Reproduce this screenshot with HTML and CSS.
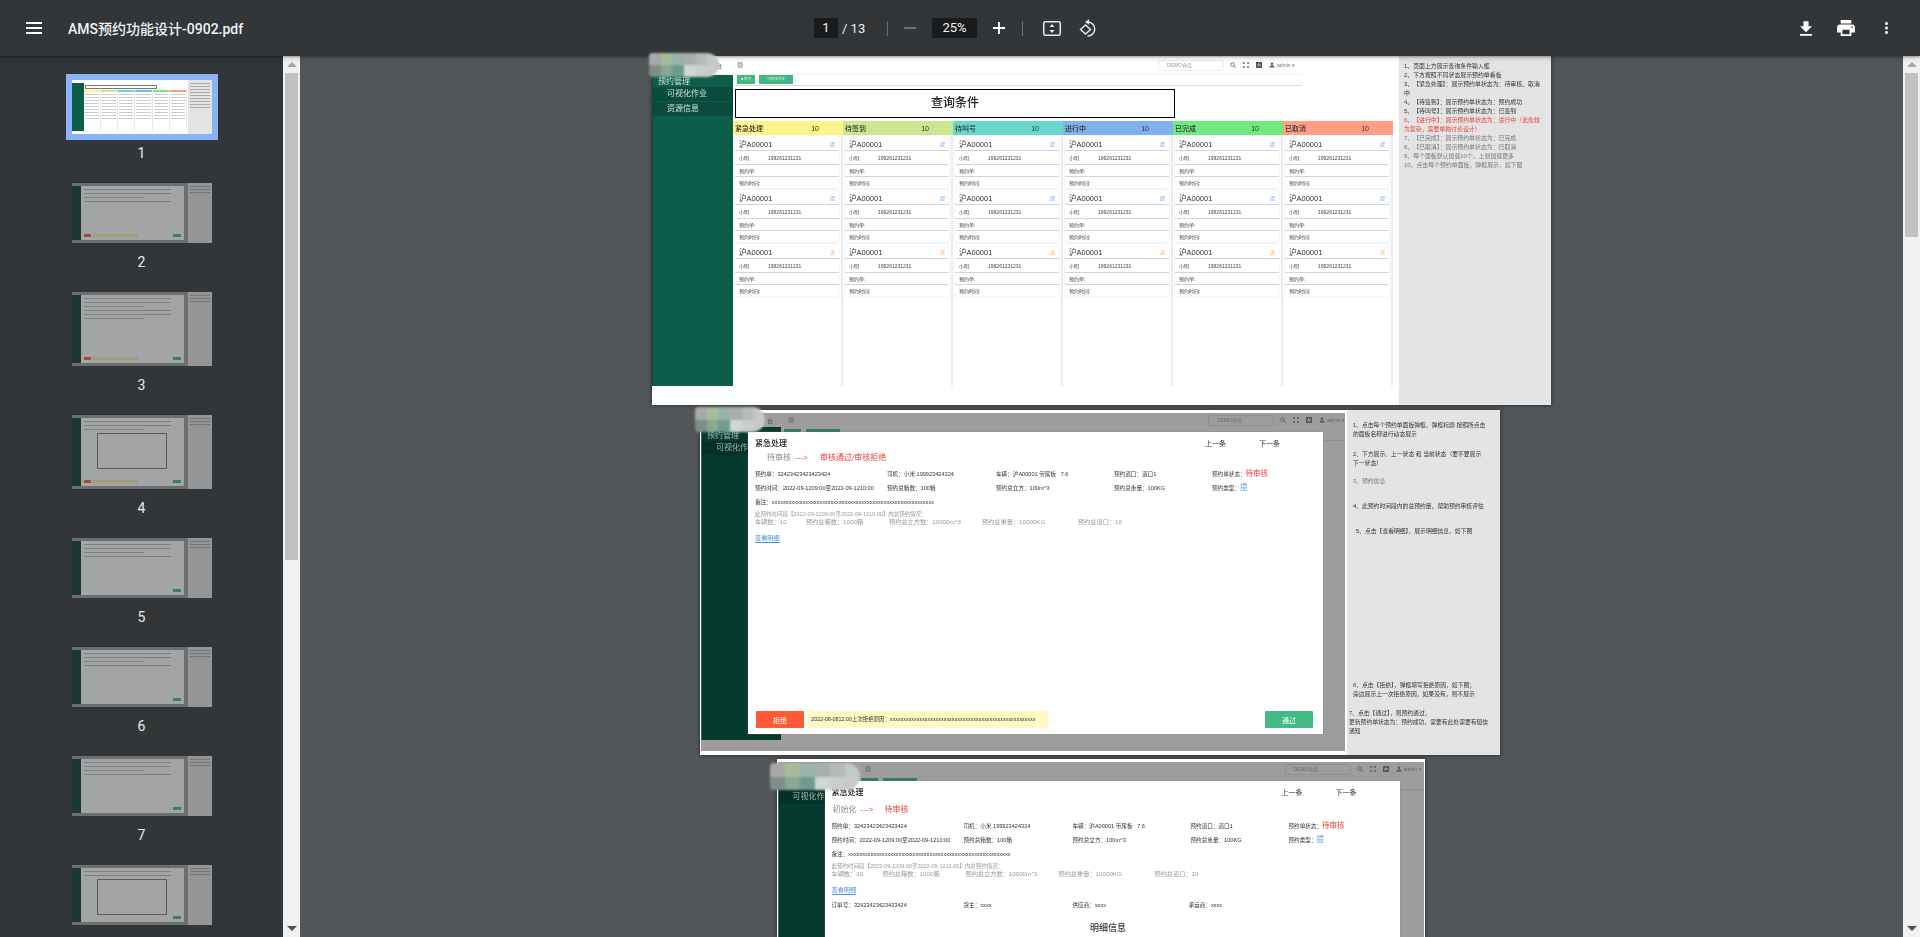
FILE: index.html
```html
<!DOCTYPE html>
<html lang="zh">
<head>
    <meta charset="UTF-8">
    <title>AMS预约功能设计-0902.pdf</title>
    <link rel="stylesheet" href="styles.css">
</head>
<body>
<svg class="defs" width="0" height="0">
    <symbol id="i-search" viewBox="0 0 12 12"><circle cx="5" cy="5" r="3.6" fill="none" stroke="currentColor" stroke-width="1.5"/><path d="M8 8l3.4 3.4" stroke="currentColor" stroke-width="1.7"/></symbol>
    <symbol id="i-full" viewBox="0 0 12 12"><path d="M1 4V1h3M8 1h3v3M11 8v3H8M4 11H1V8M1 1l3 3M11 1L8 4M11 11L8 8M1 11l3-3" fill="none" stroke="currentColor" stroke-width="1.3"/></symbol>
    <symbol id="i-lang" viewBox="0 0 12 12"><path d="M0 0h12v12H0z" fill="currentColor"/><path d="M3 9l2-6 1.5 4M8 4v5" fill="none" stroke="#fff" stroke-width="1"/></symbol>
    <symbol id="i-user" viewBox="0 0 12 12"><circle cx="6" cy="3.5" r="2.6" fill="currentColor"/><path d="M1 11c0-3 2-4 5-4s5 1 5 4z" fill="currentColor"/></symbol>
    <symbol id="i-nav" viewBox="0 0 12 12"><path d="M1 2h10M1 6h6M1 10h10" stroke="currentColor" stroke-width="1.6"/><path d="M11 4v4L8 6z" fill="currentColor"/></symbol>
</svg>

<header class="toolbar">
    <div class="tb-left">
        <svg class="ic-menu" viewBox="3 6 18 12" preserveAspectRatio="none"><path d="M3 18h18v-2H3v2zm0-5h18v-2H3v2zm0-7v2h18V6H3z" fill="#fff"/></svg>
        <span class="doc-name">AMS预约功能设计-0902.pdf</span>
    </div>
    <div class="tb-mid">
        <span class="num-box page-box">1</span>
        <span class="page-total">/ 13</span>
        <i class="tb-sep sep-a"></i>
        <i class="tb-minus"></i>
        <span class="num-box zoom-box">25%</span>
        <svg class="ic-plus" viewBox="0 0 12 12"><path d="M0 6h12M6 0v12" stroke="#fff" stroke-width="1.8"/></svg>
        <i class="tb-sep sep-b"></i>
        <svg class="ic-fit" viewBox="0 0 18 15"><rect x=".75" y=".75" width="16.5" height="13.5" rx="1.5" fill="none" stroke="#e8eaed" stroke-width="1.5"/><path d="M9 3l2.5 3h-5zM9 12L6.500 9h5z" fill="#e8eaed"/></svg>
        <svg class="ic-rotate" viewBox="0 0 18 18"><path d="M9 3a7 7 0 1 1-.5 14" fill="none" stroke="#e8eaed" stroke-width="1.4"/><path d="M10 .2L6 3l4 2.800z" fill="#e8eaed"/><path d="M6.500 6L1.500 10.500l5 4.500 5-4.500z" fill="none" stroke="#e8eaed" stroke-width="1.4"/></svg>
    </div>
    <div class="tb-right">
        <svg class="ic-down" viewBox="5 3 14 17"><path d="M19 9h-4V3H9v6H5l7 7 7-7zM5 18v2h14v-2H5z" fill="#fff"/></svg>
        <svg class="ic-print" viewBox="2 3 20 18"><path d="M19 8H5c-1.660 0-3 1.340-3 3v6h4v4h12v-4h4v-6c0-1.660-1.340-3-3-3zm-3 11H8v-5h8v5zm3-7c-.55 0-1-.45-1-1s.45-1 1-1 1 .45 1 1-.45 1-1 1zm-1-9H6v4h12V3z" fill="#fff"/></svg>
        <svg class="ic-more" viewBox="10 4 4 16"><path d="M12 8c1.100 0 2-.9 2-2s-.9-2-2-2-2 .9-2 2 .9 2 2 2zm0 2c-1.100 0-2 .9-2 2s.9 2 2 2 2-.9 2-2-.9-2-2-2zm0 6c-1.100 0-2 .9-2 2s.9 2 2 2 2-.9 2-2-.9-2-2-2z" fill="#fff"/></svg>
    </div>
</header>

<div class="viewer">
    <aside class="sidenav" id="thumbs"></aside>
    <div class="vbar">
        <b class="arrow up"></b>
        <div class="track"><div class="bar-thumb side-thumb"></div></div>
        <b class="arrow down"></b>
    </div>

    <main class="pages">
        <!-- 第一页：看板 -->
        <section class="page page-1">
            <div class="smudge smudge-1"><i></i><i></i><i></i><i></i><i></i><i></i><i></i><i></i><i></i><i></i><i></i><i></i></div>
            <div class="sheet">
                <div class="p1-left">
                    <div class="app-bar">
                        <span class="crumb">台</span>
                        <svg class="mini nav-ic"><use href="#i-nav"/></svg>
                        <span class="search-box">DEMO仓库</span>
                        <svg class="mini"><use href="#i-search"/></svg>
                        <svg class="mini"><use href="#i-full"/></svg>
                        <svg class="mini"><use href="#i-lang"/></svg>
                        <svg class="mini"><use href="#i-user"/></svg>
                        <span class="admin">admin ▾</span>
                    </div>
                    <div class="p1-body">
                        <nav class="side">
                            <div class="side-head">预约管理</div>
                            <div class="side-item">可视化作业</div>
                            <div class="side-item">资源信息</div>
                        </nav>
                        <div class="work">
                            <div class="tabs"><span class="tab tab-home">■ 首页</span><span class="tab tab-cur">可视化作业</span></div>
                            <div class="query">查询条件</div>
                            <div class="board" id="board"></div>
                        </div>
                    </div>
                </div>
                <div class="notes notes-1">
                    <p>1、页面上方展示查询条件输入框</p>
                    <p>2、下方按照不同状态展示预约单看板</p>
                    <p>3、【紧急处理】：展示预约单状态为：待审核、取消<br>中</p>
                    <p>4、【待签到】：展示预约单状态为：预约成功</p>
                    <p>5、【待叫号】：展示预约单状态为：已签到</p>
                    <p class="warn">6、【进行中】：展示预约单状态为：进行中（此处较<br>为复杂，需要单独讨论设计）</p>
                    <p class="soft">7、【已完成】：展示预约单状态为：已完成</p>
                    <p class="soft">8、【已取消】：展示预约单状态为：已取消</p>
                    <p class="soft">9、每个面板默认加载10个，上划加载更多</p>
                    <p class="soft">10、点击每个预约单面板，弹框展示，如下图</p>
                </div>
            </div>
        </section>

        <!-- 第二页：弹框 -->
        <section class="page page-2">
            <div class="smudge smudge-2"><i></i><i></i><i></i><i></i><i></i><i></i><i></i><i></i><i></i><i></i><i></i><i></i></div>
            <div class="sheet">
                <div class="shot">
                    <div class="dim">
                        <div class="app-bar dim-bar">
                            <span class="crumb">台</span>
                            <svg class="mini nav-ic"><use href="#i-nav"/></svg>
                            <span class="search-box">DEMO仓库</span>
                            <svg class="mini"><use href="#i-search"/></svg>
                            <svg class="mini"><use href="#i-full"/></svg>
                            <svg class="mini"><use href="#i-lang"/></svg>
                            <svg class="mini"><use href="#i-user"/></svg>
                            <span class="admin">admin ▾</span>
                        </div>
                        <div class="dim-body">
                            <nav class="side dim-side">
                                <div class="side-head">预约管理</div>
                                <div class="side-item">可视化作业</div>
                            </nav>
                            <div class="dim-work"><div class="dim-rule"></div></div>
                        </div>
                        <div class="peek"><i></i><i></i><i></i></div>
                        <div class="modal modal-2">
                            <div class="m-head"><strong>紧急处理</strong><span class="m-prev">上一条</span><span class="m-next">下一条</span></div>
                            <div class="m-flow"><span class="was">待审核</span><span class="to">---&gt;</span><span class="now">审核通过/审核拒绝</span></div>
                            <div class="m-grid">
                                <span>预约单：32423423423423424</span><span>司机：小米 199923424324</span><span>车辆：沪A00001 带尾板 &nbsp; 7.6</span><span>预约道口：道口1</span><span>预约单状态：<em class="st-red">待审核</em></span>
                                <span>预约时间：2022-09-1209:00至2022-09-1210:00</span><span>预约总箱数：100箱</span><span>预约总立方：100m^3</span><span>预约总重量：100KG</span><span>预约类型：<em class="st-blue">提</em></span>
                            </div>
                            <div class="m-memo">备注：xxxxxxxxxxxxxxxxxxxxxxxxxxxxxxxxxxxxxxxxxxxxxxxxxxxxxxxxxx</div>
                            <div class="m-tip">此预约时间段【2022-09-1209:00至2022-09-1210:00】内总预约情况：</div>
                            <div class="m-sum"><span>车辆数：10</span><span>预约总箱数：1000箱</span><span>预约总立方数：10000m^3</span><span>预约总重量：10000KG</span><span>预约总道口：10</span></div>
                            <a class="m-link">查看明细</a>
                            <div class="m-foot">
                                <button class="btn btn-no">拒绝</button>
                                <div class="m-reason">2022-08-0812:00上次拒绝原因：xxxxxxxxxxxxxxxxxxxxxxxxxxxxxxxxxxxxxxxxxxxxxxxxxxxxxx</div>
                                <button class="btn btn-ok">通过</button>
                            </div>
                        </div>
                    </div>
                </div>
                <div class="notes notes-2">
                    <p>1、点击每个预约单面板弹框，弹框标题 按照所点击<br>的面板名称进行动态展示</p>
                    <p>2、下方展示、上一状态 和 当前状态（要不要展示<br>下一状态）</p>
                    <p class="soft">3、预约信息</p>
                    <p>4、此预约时间段内的总预约量，帮助预约审核评估</p>
                    <p>5、点击【查看明细】，展示明细信息，如下图</p>
                    <p>6、点击【拒绝】，弹框填写拒绝原因，如下图；<br>旁边展示上一次拒绝原因，如果没有，则不展示</p>
                    <p>7、点击【通过】，则预约通过，<br>更新预约单状态为：预约成功，需要有此处需要有短信<br>通知</p>
                </div>
            </div>
        </section>

        <!-- 第三页：明细 -->
        <section class="page page-3">
            <div class="smudge smudge-3"><i></i><i></i><i></i><i></i><i></i><i></i><i></i><i></i><i></i><i></i><i></i><i></i></div>
            <div class="sheet">
                <div class="shot">
                    <div class="dim">
                        <div class="app-bar dim-bar">
                            <span class="crumb">台</span>
                            <svg class="mini nav-ic"><use href="#i-nav"/></svg>
                            <span class="search-box">DEMO仓库</span>
                            <svg class="mini"><use href="#i-search"/></svg>
                            <svg class="mini"><use href="#i-full"/></svg>
                            <svg class="mini"><use href="#i-lang"/></svg>
                            <svg class="mini"><use href="#i-user"/></svg>
                            <span class="admin">admin ▾</span>
                        </div>
                        <div class="dim-body">
                            <nav class="side dim-side">
                                <div class="side-head">预约管理</div>
                                <div class="side-item">可视化作业</div>
                            </nav>
                            <div class="dim-work"><div class="dim-rule"></div></div>
                        </div>
                        <div class="peek"><i></i><i></i><i></i></div>
                        <div class="modal modal-3">
                            <div class="m-head"><strong>紧急处理</strong><span class="m-prev">上一条</span><span class="m-next">下一条</span></div>
                            <div class="m-flow"><span class="was">初始化</span><span class="to">---&gt;</span><span class="now">待审核</span></div>
                            <div class="m-grid">
                                <span>预约单：32423423423423424</span><span>司机：小米 199923424324</span><span>车辆：沪A00001 带尾板 &nbsp; 7.6</span><span>预约道口：道口1</span><span>预约单状态：<em class="st-red">待审核</em></span>
                                <span>预约时间：2022-09-1209:00至2022-09-1210:00</span><span>预约总箱数：100箱</span><span>预约总立方：100m^3</span><span>预约总重量：100KG</span><span>预约类型：<em class="st-blue">提</em></span>
                            </div>
                            <div class="m-memo">备注：xxxxxxxxxxxxxxxxxxxxxxxxxxxxxxxxxxxxxxxxxxxxxxxxxxxxxxxxxx</div>
                            <div class="m-tip">此预约时间段【2022-09-1209:00至2022-09-1210:00】内总预约情况：</div>
                            <div class="m-sum"><span>车辆数：10</span><span>预约总箱数：1000箱</span><span>预约总立方数：10000m^3</span><span>预约总重量：10000KG</span><span>预约总道口：10</span></div>
                            <a class="m-link">查看明细</a>
                            <div class="m-order"><span>订单号：32423423423423424</span><span>货主：xxxx</span><span>供应商：xxxx</span><span>承运商：xxxx</span></div>
                            <div class="m-detail">明细信息</div>
                        </div>
                    </div>
                </div>
            </div>
        </section>
    </main>

    <div class="vbar">
        <b class="arrow up"></b>
        <div class="track"><div class="bar-thumb main-thumb"></div></div>
        <b class="arrow down"></b>
    </div>
</div>

<script src="script.js"></script>
</body>
</html>
```

FILE: styles.css
```css
* {
    padding: 0;
    margin: 0;
    box-sizing: border-box;
}

html, body {
    width: 1920px;
    height: 937px;
    overflow: hidden;
}

body {
    background: #525659;
    font-family: Roboto, "Noto Sans CJK SC", sans-serif;
    display: flex;
    flex-direction: column;
}

.defs {
    position: absolute;
}

/* 顶部工具栏 */
.toolbar {
    height: 56px;
    flex: none;
    background: #323639;
    color: #f1f3f4;
    display: flex;
    align-items: center;
    position: relative;
    z-index: 2;
    box-shadow: 0 1px 2px rgba(0, 0, 0, .3), 0 2px 6px rgba(0, 0, 0, .15);
}

.tb-left {
    width: 814px;
    padding-left: 26px;
    display: flex;
    align-items: center;
}

.ic-menu {
    width: 16px;
    height: 12px;
}

.doc-name {
    margin-left: 26px;
    font-size: 14px;
    font-weight: 500;
}

.tb-mid {
    display: flex;
    align-items: center;
    font-size: 13px;
}

.num-box {
    height: 20px;
    line-height: 20px;
    background: #191b1c;
    text-align: center;
}

.page-box {
    width: 24px;
}

.page-total {
    margin-left: 4px;
    width: 24px;
}

.tb-sep {
    width: 1px;
    height: 15px;
    background: #6b6e70;
}

.sep-a {
    margin-left: 21px;
}

.sep-b {
    margin-left: 17px;
}

.tb-minus {
    width: 12px;
    height: 2px;
    margin-left: 16px;
    background: #6f7274;
}

.zoom-box {
    width: 45px;
    margin-left: 16px;
}

.ic-plus {
    width: 12px;
    height: 12px;
    margin-left: 16px;
}

.ic-fit {
    width: 18px;
    height: 15px;
    margin-left: 20px;
}

.ic-rotate {
    width: 18px;
    height: 18px;
    margin-left: 18px;
}

.tb-right {
    margin-left: auto;
    padding-right: 32px;
    display: flex;
    align-items: center;
}

.ic-down {
    width: 12px;
    height: 15px;
}

.ic-print {
    width: 18px;
    height: 16px;
    margin-left: 25px;
}

.ic-more {
    width: 3px;
    height: 12px;
    margin-left: 30px;
}

.viewer {
    flex: 1;
    min-height: 0;
    display: flex;
}

/* 左侧缩略图 */
.sidenav {
    width: 283px;
    flex: none;
    background: #323639;
    padding-top: 24px;
    overflow: hidden;
    display: flex;
    flex-direction: column;
    align-items: center;
    color: #e8eaed;
    font-size: 14px;
}

.t-item {
    flex: none;
    width: 140px;
    text-align: center;
}

.t-label {
    height: 14px;
    line-height: 14px;
    margin: 12px 0 23px;
}

.t-page {
    width: 140px;
    background: #fff;
    display: flex;
    text-align: left;
    filter: blur(.4px);
}

.t-dimmed {
    opacity: .55;
}

.t-cur {
    outline: 6px solid #8ab4f8;
}

.t-main {
    flex: 1;
    display: flex;
    flex-direction: column;
}

.t-top {
    height: 3px;
}

.t-body {
    flex: 1;
    display: flex;
    margin-bottom: 3px;
}

.t-green {
    width: 12px;
    background: #0d5d4b;
}

.t-work {
    flex: 1;
    padding-top: 2px;
}

.t-query {
    width: 72px;
    height: 4px;
    margin-left: 1px;
    border: 1px solid #777;
}

.t-cols {
    display: flex;
    margin-top: 1px;
}

.t-col {
    flex: 1;
    height: 41px;
    border-right: 1px solid #e8e8e8;
}

.t-col u {
    display: block;
    height: 2px;
}

.t-col s {
    display: block;
    height: 1px;
    margin: 2px 1px;
    background: #ccc;
}

.t-note {
    width: 24px;
    background: #e4e4e4;
    padding: 3px 2px;
}

.t-note s {
    display: block;
    height: 1px;
    margin-bottom: 2px;
    background: #aaa;
}

.t-shot {
    flex: 1;
    background: #9d9d9d;
    display: flex;
    padding: 3px 4px 3px 0;
}

.t-dside {
    width: 9px;
    background: #053b2f;
}

.t-modal {
    flex: 1;
    background: #fff;
    padding: 3px;
    display: flex;
    flex-direction: column;
}

.t-modal s {
    display: block;
    height: 1px;
    width: 90%;
    margin-bottom: 3px;
    background: #bbb;
}

.t-modal s:nth-child(3n) {
    width: 62%;
}

.t-foot {
    margin-top: auto;
    display: flex;
    justify-content: space-between;
    gap: 1px;
}

.t-foot i {
    height: 3px;
    width: 8px;
    background: #43ba84;
}

.t-foot i.r {
    background: #ff5a36;
    width: 7px;
}

.t-foot i.y {
    background: #fff4b0;
    flex: 1;
    margin-right: 34px;
}

.t-foot i.blank {
    background: none;
    flex: 1;
}

.t-pop {
    width: 70px;
    height: 36px;
    margin: 0 auto;
    border: 1px solid #777;
    background: #fff;
}

/* 滚动条 */
.vbar {
    width: 17px;
    flex: none;
    background: #f1f1f1;
    display: flex;
    flex-direction: column;
    position: relative;
    z-index: 1;
}

.arrow {
    height: 17px;
    flex: none;
    display: flex;
    align-items: center;
    justify-content: center;
}

.arrow:after {
    content: "";
    border-left: 5px solid transparent;
    border-right: 5px solid transparent;
}

.up:after {
    border-bottom: 5px solid #a3a3a3;
}

.down:after {
    border-top: 5px solid #505050;
}

.track {
    flex: 1;
}

.bar-thumb {
    margin: 0 2px;
    background: #c1c1c1;
}

.side-thumb {
    height: 487px;
}

.main-thumb {
    height: 164px;
}

/* PDF 页面 */
.pages {
    flex: 1;
    min-width: 0;
    height: 881px;
    display: flex;
    flex-direction: column;
    align-items: center;
    gap: 4px;
}

.page {
    flex: none;
    position: relative;
    font-family: "Liberation Sans", "Noto Sans CJK SC", sans-serif;
    box-shadow: 0 0 4px rgba(0, 0, 0, .55);
}

.sheet {
    width: 100%;
    height: 100%;
    background: #fff;
    display: flex;
    color: #333;
    font-size: 6px;
    filter: blur(.35px);
}

.page-1 {
    width: 899px;
    height: 349px;
}

.page-2 {
    width: 800px;
    height: 345px;
    margin: 1px 3px 0 0;
}

.page-3 {
    width: 648px;
    height: 179px;
    margin: 0 2px 0 0;
}

/* 打码的 logo */
.smudge {
    position: absolute;
    z-index: 3;
    display: grid;
    grid-template-columns: repeat(6, 1fr);
    grid-template-rows: 1fr 1fr;
    overflow: hidden;
    border-radius: 4px 14px 14px 4px;
    filter: blur(1px);
}

.smudge-1 {
    left: -3px;
    top: -3px;
    width: 70px;
    height: 24px;
}

.smudge-2 {
    left: -5px;
    top: -3px;
    width: 70px;
    height: 25px;
}

.smudge-3 {
    left: -7px;
    top: 4px;
    width: 90px;
    height: 27px;
}

.smudge i:nth-child(1) { background: #a9a9a9; }
.smudge i:nth-child(2) { background: #a3bd9b; }
.smudge i:nth-child(3) { background: #9ab3a8; }
.smudge i:nth-child(4) { background: #a8afab; }
.smudge i:nth-child(5) { background: #b5bbb8; }
.smudge i:nth-child(6) { background: #c4c8c6; }
.smudge i:nth-child(7) { background: #7f8f88; }
.smudge i:nth-child(8) { background: #86a894; }
.smudge i:nth-child(9) { background: #6f9c8c; }
.smudge i:nth-child(10) { background: #cfd6d3; }
.smudge i:nth-child(11) { background: #c9cecc; }
.smudge i:nth-child(12) { background: #c9c9c9; }

/* 截图里的顶栏 */
.app-bar {
    height: 19px;
    width: 650px;
    display: flex;
    align-items: center;
    padding-left: 64px;
    color: #555;
    font-size: 5px;
    border-bottom: 1px solid #f2f2f2;
}

.crumb {
    width: 8px;
    font-size: 6px;
}

.mini {
    width: 6px;
    height: 6px;
    margin-left: 7px;
    color: #555;
}

.nav-ic {
    margin-left: 13px;
    margin-right: 415px;
}

.search-box {
    width: 66px;
    height: 11px;
    line-height: 9px;
    padding-left: 8px;
    margin-right: -1px;
    border: 1px solid #eee;
    border-radius: 2px;
    color: #999;
}

.admin {
    margin-left: 2px;
    color: #777;
    white-space: nowrap;
}

.p1-left {
    width: 747px;
    flex: none;
}

.p1-body {
    height: 311px;
    display: flex;
}

.side {
    width: 81px;
    flex: none;
    background: #0d5d4b;
    color: #cfe3dc;
    font-size: 8px;
    padding-top: 2px;
    border-left: 1px solid #0a4a3c;
}

.side-head {
    height: 10px;
    line-height: 10px;
    padding-left: 5px;
}

.side-item {
    height: 14px;
    line-height: 14px;
    padding-left: 14px;
    margin-bottom: 1px;
    background: #0b4b3e;
}

.work {
    flex: 1;
    min-width: 0;
}

.tabs {
    height: 11px;
    padding-left: 4px;
    display: flex;
    border-bottom: 1px solid #ddd;
    width: 569px;
}

.tab {
    height: 9px;
    line-height: 9px;
    font-size: 3.500px;
    color: #d8f3e6;
    text-align: center;
    background: #41b883;
}

.tab-home {
    width: 18px;
}

.tab-cur {
    width: 34px;
    margin-left: 4px;
}

.query {
    width: 440px;
    height: 29px;
    margin: 3px 0 0 2px;
    border: 1px solid #000;
    text-align: center;
    line-height: 27px;
    font-size: 12px;
    font-weight: 500;
    color: #222;
}

.board {
    width: 660px;
    margin-top: 3px;
    display: grid;
    grid-template-columns: repeat(6, 110px);
}

.col-head {
    height: 14px;
    padding: 0 24px 0 2px;
    display: flex;
    justify-content: space-between;
    align-items: center;
    font-size: 7px;
    font-weight: 500;
    color: #333;
}

.col-body {
    height: 251px;
    padding: 1px 2px 0 2px;
    border-right: 2px solid #e9ecf1;
}

.card {
    height: 52px;
    margin-bottom: 2px;
    border-radius: 2px;
    box-shadow: 0 0 2px #d8dbe0;
    background: #fff;
    font-size: 5px;
    color: #444;
}

.card div {
    display: flex;
    align-items: center;
    padding: 0 4px;
    border-bottom: 1px solid #d4d4d4;
}

.card .c-title {
    height: 15px;
    font-size: 7.500px;
    color: #333;
    justify-content: space-between;
}

.c-title em {
    font-style: normal;
    font-size: 5px;
}

.c-blue {
    color: #6aa5ff;
}

.c-orange {
    color: #ffab66;
}

.card .c-name {
    height: 14px;
    gap: 19px;
}

.card .c-no {
    height: 12px;
}

.card .c-time {
    height: 11px;
    border-bottom: 0;
}

.notes {
    flex: 1;
    background: #e4e4e4;
    font-size: 5.800px;
    line-height: 9px;
    color: #333;
}

.notes-1 {
    font-size: 5.900px;
    padding: 6px 4px 0 5px;
}

.warn {
    color: #e8403a;
}

.soft {
    color: #777;
}

/* 第二、三页的灰色遮罩截图 */
.shot {
    width: 647px;
    flex: none;
    padding: 3px 2px 4px 1px;
}

.page-3 .shot {
    width: 100%;
    padding: 3px 1px 0;
}

.dim {
    height: 100%;
    background: #9d9d9d;
    position: relative;
    display: flex;
    flex-direction: column;
    overflow: hidden;
}

.dim-bar {
    height: 14px;
    width: 100%;
    border: 0;
    color: #555;
    padding-left: 66px;
    flex: none;
}

.dim-bar .nav-ic {
    margin-right: 414px;
}

.dim-bar .search-box {
    border-color: #8f8f8f;
    color: #6c6c6c;
}

.dim-bar .admin {
    color: #666;
}

.dim-body {
    flex: 1;
    min-height: 0;
    display: flex;
}

.dim-side {
    width: 80px;
    height: 313px;
    background: #053b2f;
    color: #a5b9b2;
    padding-top: 4px;
    border-left: 1px solid #2a6b58;
}

.dim-side .side-item {
    background: #03302a;
}

.dim-work {
    flex: 1;
}

.dim-rule {
    height: 1px;
    margin-top: 13px;
    background: #8f8f8f;
}

/* 露在弹框上面的页签 */
.peek {
    position: absolute;
    left: 57px;
    top: 16px;
    display: flex;
    gap: 5px;
}

.peek i {
    height: 3px;
    width: 21px;
    background: #0a3a30;
}

.peek i:nth-child(2) {
    width: 17px;
    background: #2f7d5a;
}

.peek i:nth-child(3) {
    width: 34px;
    background: #2f7d5a;
}

.modal {
    position: absolute;
    left: 47px;
    top: 19px;
    width: 575px;
    background: #fff;
    padding: 6px 9px 6px 7px;
    display: flex;
    flex-direction: column;
    color: #333;
    box-shadow: 0 0 1px #777;
}

.modal-2 {
    height: 302px;
}

.modal-3 {
    height: 157px;
}

.m-head {
    height: 12px;
    line-height: 12px;
    display: flex;
    font-size: 7px;
}

.m-head strong {
    font-size: 8px;
    font-weight: 500;
    color: #222;
    width: 450px;
}

.m-next {
    margin-left: 33px;
}

.m-flow {
    height: 12px;
    line-height: 12px;
    margin-top: 2px;
    padding-left: 12px;
    display: flex;
    font-size: 8px;
}

.modal-3 .m-flow {
    margin-top: 5px;
    padding-left: 1px;
}

.was {
    color: #8a8a8a;
    width: 28px;
}

.to {
    color: #e8403a;
    width: 25px;
}

.modal-3 .to {
    width: 24px;
}

.now {
    color: #e8403a;
}

.m-grid {
    margin-top: 3px;
    display: grid;
    grid-template-columns: 132px 109px 118px 98px 1fr;
    grid-auto-rows: 14px;
    line-height: 14px;
    font-size: 5.600px;
    white-space: nowrap;
}

.m-grid em {
    font-style: normal;
    font-size: 7.500px;
}

.st-red {
    color: #e8403a;
}

.st-blue {
    color: #5a9bf0;
}

.m-memo {
    height: 14px;
    line-height: 14px;
    font-size: 5.600px;
    white-space: nowrap;
}

.m-tip {
    height: 8px;
    line-height: 8px;
    margin-top: 1px;
    font-size: 5.500px;
    color: #999;
}

.m-sum {
    height: 8px;
    line-height: 8px;
    display: grid;
    grid-template-columns: 51px 83px 93px 96px 1fr;
    font-size: 6.200px;
    color: #999;
    white-space: nowrap;
}

.m-link {
    align-self: flex-start;
    height: 9px;
    line-height: 8px;
    margin-top: 8px;
    font-size: 6.200px;
    color: #4a90e2;
    border-bottom: 1px solid #4a90e2;
}

.m-foot {
    margin-top: auto;
    padding: 0 1px 0 1px;
    display: flex;
    height: 17px;
}

.btn {
    border: 0;
    border-radius: 1px;
    width: 48px;
    font-family: inherit;
    font-size: 7px;
    color: #fff;
}

.btn-no {
    background: #ff5a36;
}

.btn-ok {
    background: #43ba84;
    margin-left: auto;
}

.m-reason {
    width: 241px;
    margin-left: 3px;
    padding-left: 4px;
    line-height: 17px;
    background: #fff9c4;
    font-size: 5.400px;
    white-space: nowrap;
    overflow: hidden;
}

.m-order {
    margin-top: 3px;
    height: 14px;
    line-height: 14px;
    display: grid;
    grid-template-columns: 132px 109px 116px 1fr;
    font-size: 5.600px;
}

.m-detail {
    margin-top: 10px;
    line-height: 12px;
    text-align: center;
    font-size: 9px;
    font-weight: 500;
    padding-right: 6px;
}

.notes-2 {
    padding: 11px 2px 0 6px;
}

.notes-2 p:nth-child(2) { margin-top: 11px; }
.notes-2 p:nth-child(3) { margin-top: 9px; }
.notes-2 p:nth-child(4) { margin-top: 16px; }
.notes-2 p:nth-child(5) { margin-top: 16px; padding-left: 3px; }
.notes-2 p:nth-child(6) { margin-top: 145px; }
.notes-2 p:nth-child(7) { margin-top: 10px; margin-left: -4px; }
```

FILE: script.js
```js
// 看板：六列，每列三张卡片
var cols = [
    ["紧急处理", "#fff38a"],
    ["待签到", "#cbe78f"],
    ["待叫号", "#69d8cc"],
    ["进行中", "#7fb2ec"],
    ["已完成", "#6fea7f"],
    ["已取消", "#ff9d85"]
];
var board = document.getElementById("board");
var html = "";
for (var i = 0; i < cols.length; i++) {
    html += '<div><div class="col-head" style="background:' + cols[i][1] + '"><span>' + cols[i][0] + '</span><span>10</span></div><div class="col-body">';
    for (var j = 0; j < 3; j++) {
        var tag = j == 2 ? '<em class="c-orange">送</em>' : '<em class="c-blue">提</em>';
        html += '<div class="card"><div class="c-title"><span>沪A00001</span>' + tag + '</div>'
            + '<div class="c-name"><span>小明</span><span>199261231231</span></div>'
            + '<div class="c-no">预约单:</div><div class="c-time">预约时间:</div></div>';
    }
    html += '</div></div>';
}
board.innerHTML = html;

// 左侧缩略图
function lines(n, tag) {
    var s = "";
    for (var k = 0; k < n; k++) s += "<" + tag + "></" + tag + ">";
    return s;
}

function boardThumb() {
    var s = '<div class="t-main"><div class="t-top"></div><div class="t-body"><div class="t-green"></div><div class="t-work"><div class="t-query"></div><div class="t-cols">';
    for (var c = 0; c < cols.length; c++) {
        s += '<div class="t-col"><u style="background:' + cols[c][1] + '"></u>' + lines(9, "s") + '</div>';
    }
    return s + '</div></div></div></div><div class="t-note">' + lines(9, "s") + '</div>';
}

function modalThumb(rows, foot, pop) {
    var end = foot == 2 ? '<i class="r"></i><i class="y"></i><i></i>' : '<i class="blank"></i><i></i>';
    return '<div class="t-shot"><div class="t-dside"></div><div class="t-modal">' + lines(rows, "s")
        + (pop ? '<div class="t-pop"></div>' : '')
        + '<div class="t-foot">' + end + '</div></div></div><div class="t-note">' + lines(3, "s") + '</div>';
}

var thumbs = [
    [54, boardThumb(), true],
    [60, modalThumb(4, 2, false)],
    [74, modalThumb(6, 2, false)],
    [74, modalThumb(3, 2, true)],
    [60, modalThumb(4, 1, false)],
    [60, modalThumb(4, 1, false)],
    [60, modalThumb(4, 1, false)],
    [60, modalThumb(2, 1, true)]
];
var nav = document.getElementById("thumbs");
var out = "";
for (var t = 0; t < thumbs.length; t++) {
    // 最后一张的页码已在窗口之外
    var label = t < thumbs.length - 1 ? '<div class="t-label">' + (t + 1) + '</div>' : '';
    out += '<div class="t-item"><div class="t-page ' + (thumbs[t][2] ? "t-cur" : "t-dimmed") + '" style="height:' + thumbs[t][0] + 'px">'
        + thumbs[t][1] + '</div>' + label + '</div>';
}
nav.innerHTML = out;
```
